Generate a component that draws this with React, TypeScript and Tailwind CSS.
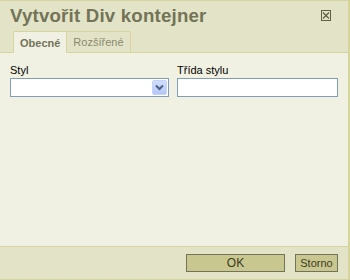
import React from "react";

export default function App() {
  return (
    <div
      className="w-[350px] h-[280px] flex flex-col bg-[#e3e3c7] border-t border-b border-r-2 border-[#d5d59d] overflow-hidden"
      style={{ fontFamily: '"Liberation Sans", Arial, sans-serif' }}
    >
      {/* Header */}
      <div className="h-[30px] flex items-start justify-between pl-[10px] pr-[17px]">
        <div className="text-[18.67px] leading-[22px] font-bold text-[#737357] mt-[4px] tracking-[0.2px]">
          Vytvořit Div kontejner
        </div>
        <div className="mt-[9px] w-[10px] h-[11px] border border-[#5f5f45] flex items-center justify-center">
          <svg width="8" height="9" viewBox="0 0 8 9">
            <path d="M1 1.5 L7 7.5 M7 1.5 L1 7.5" stroke="#5f5f45" strokeWidth="1.2" />
          </svg>
        </div>
      </div>
      {/* Tabs */}
      <div className="flex items-end pl-[13px] border-b border-[#d5d59d] h-[22px]">
        <div className="h-[22px] -mb-px px-[6px] border border-b-0 border-[#d5d59d] bg-[#f1f1e3] text-[11px] font-bold text-[#737357] flex items-center pt-[2px]">
          Obecné
        </div>
        <div className="h-[21px] px-[6px] border border-l-0 border-b-0 border-[#d5d59d] bg-[#e3e3c7] text-[11px] text-[#8a8a70] flex items-center pt-[1px]">
          Rozšířené
        </div>
      </div>
      {/* Content */}
      <div className="flex-1 bg-[#f1f1e3] pt-[11px] pl-[10px] pr-[10px] flex gap-[8px]">
        <div className="w-[159px] flex flex-col">
          <div className="text-[11px] leading-[13px] text-black">Styl</div>
          <div className="mt-px h-[19px] border border-[#7f9db9] bg-white flex items-center justify-end pr-px">
            <div className="w-[15px] h-[15px] rounded-[2px] bg-[linear-gradient(#d0defc,#b4c8f6)] border border-[#c3d3fd] flex items-center justify-center">
              <svg width="9" height="7" viewBox="0 0 9 7">
                <path d="M1 1.5 L4.5 5 L8 1.5" fill="none" stroke="#4d6185" strokeWidth="2" />
              </svg>
            </div>
          </div>
        </div>
        <div className="w-[161px] flex flex-col">
          <div className="text-[11px] leading-[13px] text-black">Třída stylu</div>
          <div className="mt-px h-[19px] border border-[#7f9db9] bg-white" />
        </div>
      </div>
      {/* Footer */}
      <div className="h-[33px] border-t border-[#d5d59d] bg-[#e3e3c7] flex items-start justify-end pt-[7px] pr-[10px] gap-[10px]">
        <button className="w-[99px] h-[18px] border border-[#737357] bg-[#c7c78f] text-[12px] leading-[16px] text-[#3b3b1f] flex items-center justify-center">
          OK
        </button>
        <button className="w-[43px] h-[18px] border border-[#737357] bg-[#c7c78f] text-[11px] leading-[16px] text-[#3b3b1f] flex items-center justify-center">
          Storno
        </button>
      </div>
    </div>
  );
}
